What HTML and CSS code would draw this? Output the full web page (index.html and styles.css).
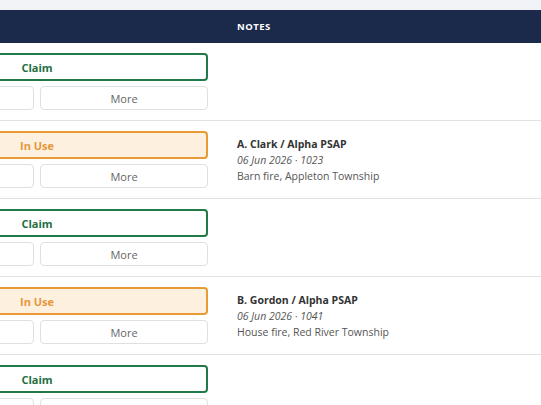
FILE: index.html
```html
<!DOCTYPE html>
<html lang="en">
<head>
    <meta charset="UTF-8">
    <meta name="viewport" content="width=device-width, initial-scale=1.0">
    <title>Unit Board</title>
    <link rel="stylesheet" href="styles.css">
</head>
<body>
    <div class="board">
        <table class="units">
            <thead>
                <tr>
                    <th class="col-actions"></th>
                    <th class="col-notes">Notes</th>
                </tr>
            </thead>
            <tbody>
                <tr>
                    <td class="actions">
                        <button class="btn-main claim">Claim</button>
                        <div class="btn-row">
                            <button class="btn-small">Release</button>
                            <button class="btn-small">More</button>
                        </div>
                    </td>
                    <td class="notes"></td>
                </tr>
                <tr>
                    <td class="actions">
                        <button class="btn-main in-use">In Use</button>
                        <div class="btn-row">
                            <button class="btn-small">Release</button>
                            <button class="btn-small">More</button>
                        </div>
                    </td>
                    <td class="notes">
                        <div class="note-who">A. Clark / Alpha PSAP</div>
                        <div class="note-when">06 Jun 2026 · 1023</div>
                        <div class="note-what">Barn fire, Appleton Township</div>
                    </td>
                </tr>
                <tr>
                    <td class="actions">
                        <button class="btn-main claim">Claim</button>
                        <div class="btn-row">
                            <button class="btn-small">Release</button>
                            <button class="btn-small">More</button>
                        </div>
                    </td>
                    <td class="notes"></td>
                </tr>
                <tr>
                    <td class="actions">
                        <button class="btn-main in-use">In Use</button>
                        <div class="btn-row">
                            <button class="btn-small">Release</button>
                            <button class="btn-small">More</button>
                        </div>
                    </td>
                    <td class="notes">
                        <div class="note-who">B. Gordon / Alpha PSAP</div>
                        <div class="note-when">06 Jun 2026 · 1041</div>
                        <div class="note-what">House fire, Red River Township</div>
                    </td>
                </tr>
                <tr>
                    <td class="actions">
                        <button class="btn-main claim">Claim</button>
                        <div class="btn-row">
                            <button class="btn-small">Release</button>
                            <button class="btn-small">More</button>
                        </div>
                    </td>
                    <td class="notes"></td>
                </tr>
            </tbody>
        </table>
    </div>
</body>
</html>
```

FILE: styles.css
```css
* {
    margin: 0;
    padding: 0;
    box-sizing: border-box;
    font-family: "Open Sans", "Noto Sans", sans-serif;
}

body {
    background-color: #f1f3f6;
    overflow: hidden;
}

/* table is scrolled sideways: actions column is partly out of view */
.board {
    padding-top: 10px;
    margin-left: -146px;
    width: 760px;
}

.units {
    width: 100%;
    border-collapse: collapse;
    background-color: white;
}

.units th {
    background-color: #1b2a4a;
    color: white;
    height: 33px;
    font-size: 9.5px;
    font-weight: 700;
    letter-spacing: 0.5px;
    text-transform: uppercase;
    text-align: left;
}

.col-actions {
    width: 371px;
}

.units td {
    border-bottom: 1px solid #e2e2e2;
    vertical-align: middle;
}

.actions {
    padding: 10px 17px 10px 12px;
}

.notes {
    padding: 0 12px;
    font-size: 10.5px;
    line-height: 16px;
    color: #555;
}

.col-notes {
    padding: 0 12px;
}

.btn-main {
    display: block;
    width: 342px;
    height: 28px;
    border-radius: 4px;
    font-size: 11px;
    font-weight: 700;
    background-color: white;
    cursor: pointer;
}

.claim {
    border: 2px solid #1f7a47;
    color: #1f6e42;
}

.in-use {
    border: 2px solid #e99a35;
    background-color: #fdf0df;
    color: #e8963a;
}

.btn-row {
    display: flex;
    gap: 6px;
    margin-top: 5px;
    width: 342px;
}

.btn-small {
    flex: 1;
    height: 24px;
    border: 1px solid #e0e0e0;
    border-radius: 4px;
    background-color: white;
    color: #666;
    font-size: 11px;
    cursor: pointer;
}

.note-who {
    font-weight: 700;
    color: #333;
}

.note-when {
    font-style: italic;
}
```
